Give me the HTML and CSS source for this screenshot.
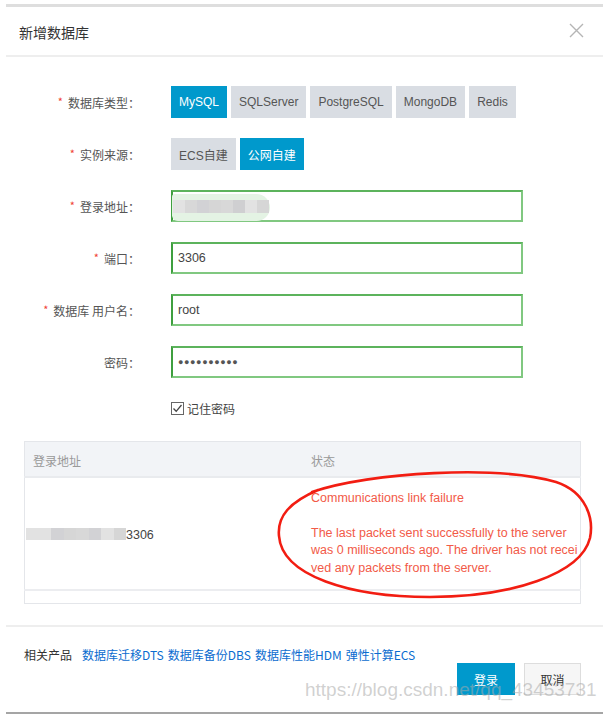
FILE: index.html
```html
<!DOCTYPE html>
<html lang="zh-CN">
<head>
<meta charset="utf-8">
<title>新增数据库</title>
<link rel="stylesheet" href="styles.css">
</head>
<body>
<div class="page">
  <div class="dialog">
    <div class="header">
      <span class="title">新增数据库</span>
      <svg class="close" width="15" height="15" viewBox="0 0 15 15"><path d="M1 1L14 14M14 1L1 14" stroke="#b5b5b5" stroke-width="1.4" fill="none"/></svg>
    </div>

    <div class="form">
      <div class="row">
        <div class="lbl"><i>*</i>数据库类型：</div>
        <div class="btns">
          <span class="opt on">MySQL</span>
          <span class="opt">SQLServer</span>
          <span class="opt">PostgreSQL</span>
          <span class="opt">MongoDB</span>
          <span class="opt">Redis</span>
        </div>
      </div>
      <div class="row">
        <div class="lbl"><i>*</i>实例来源：</div>
        <div class="btns">
          <span class="opt">ECS自建</span>
          <span class="opt on">公网自建</span>
        </div>
      </div>
      <div class="row">
        <div class="lbl"><i>*</i>登录地址：</div>
        <div class="field">
          <span class="blob"></span>
          <span class="mosaic">
            <b class="m1"></b><b class="m2"></b><b class="m3"></b><b class="m4"></b><b class="m2"></b><b class="m5"></b><b class="m1"></b><b class="m4"></b>
          </span>
        </div>
      </div>
      <div class="row">
        <div class="lbl"><i>*</i>端口：</div>
        <div class="field">3306</div>
      </div>
      <div class="row">
        <div class="lbl"><i>*</i>数据库 用户名：</div>
        <div class="field">root</div>
      </div>
      <div class="row">
        <div class="lbl">密码：</div>
        <div class="field pwd">●●●●●●●●●●</div>
      </div>
      <div class="row check-row">
        <div class="lbl"></div>
        <div class="check">
          <svg class="box" width="13" height="13" viewBox="0 0 13 13"><rect x="0.5" y="0.5" width="12" height="12" fill="#fff" stroke="#666"/><path d="M2.5 6.5L5.2 9.3L10.5 3" stroke="#444" stroke-width="1.3" fill="none"/></svg>
          <span>记住密码</span>
        </div>
      </div>
    </div>

    <div class="table-wrap">
      <table class="grid">
        <thead>
          <tr><th class="c1">登录地址</th><th class="c2">状态</th></tr>
        </thead>
        <tbody>
          <tr class="data">
            <td class="c1"><span class="mosaic small"><b class="m1"></b><b class="m1"></b><b class="m3"></b><b class="m4"></b><b class="m2"></b><b class="m3"></b><b class="m1"></b><b class="m4"></b></span>3306</td>
            <td class="c2 err">Communications link failure<br><br>The last packet sent successfully to the server<br>was 0 milliseconds ago. The driver has not recei<br>ved any packets from the server.</td>
          </tr>
          <tr class="empty"><td></td><td></td></tr>
        </tbody>
      </table>
      <svg class="ring" width="328" height="136" viewBox="0 0 328 136">
        <path d="M42 26 C 100 6, 228 -1, 286 16 C 316 26, 324 52, 320 72 C 311 108, 242 131, 160 131 C 80 131, 12 110, 9 70 C 7 50, 20 36, 48 24" stroke="#f21d12" stroke-width="2.6" fill="none" stroke-linecap="round"/>
      </svg>
    </div>

    <div class="footer">
      <div class="links">
        <span class="rel">相关产品</span>
        <a>数据库迁移DTS</a>
        <a>数据库备份DBS</a>
        <a>数据库性能HDM</a>
        <a>弹性计算ECS</a>
      </div>
      <div class="actions">
        <span class="btn primary">登录</span>
        <span class="btn">取消</span>
      </div>
    </div>
  </div>
  <div class="watermark">https://blog.csdn.net/qq_43453731</div>
</div>
</body>
</html>
```

FILE: styles.css
```css
html, body {
  margin: 0;
  padding: 0;
  background: #fff;
}

body {
  font-family: "Liberation Sans", "Noto Sans CJK SC", sans-serif;
  font-size: 12px;
  color: #333;
}

.page {
  position: relative;
  width: 603px;
  height: 717px;
  padding-top: 4px;
  box-sizing: border-box;
  overflow: hidden;
}

.dialog {
  margin-left: 6px;
  border-top: 3px solid #dedede;
  border-bottom: 2px solid #a5a5a5;
  height: 710px;
  box-sizing: border-box;
  display: flex;
  flex-direction: column;
}

.header {
  height: 50px;
  border-bottom: 2px solid #eeeeee;
  display: flex;
  align-items: center;
  justify-content: space-between;
  padding: 2px 19px 0 13px;
  box-sizing: border-box;
}

.title {
  font-family: "Noto Sans CJK SC", sans-serif;
  font-size: 14px;
  color: #333;
}

.close {
  margin-top: -4px;
}

.form {
  padding-top: 29px;
  display: flex;
  flex-direction: column;
  gap: 20px;
}

.row {
  display: grid;
  grid-template-columns: 134px 352px;
  column-gap: 31px;
  align-items: center;
  height: 32px;
}

.lbl {
  text-align: right;
  font-family: "Noto Sans CJK SC", sans-serif;
  font-size: 12px;
  color: #555;
  white-space: nowrap;
}

.lbl i {
  font-style: normal;
  color: #f04134;
  font-size: 11px;
  margin-right: 5px;
  position: relative;
  top: -2px;
}

.btns {
  display: flex;
  gap: 3px;
  height: 32px;
}

.btns .opt {
  display: flex;
  align-items: center;
  padding: 0 8px;
  background: #d9dde3;
  color: #555;
  font-size: 12px;
  white-space: nowrap;
}

.btns .opt.on {
  background: #0099cc;
  color: #fff;
}

.btns .opt + .opt {
  margin-left: 1px;
}

.field {
  height: 32px;
  box-sizing: border-box;
  border: 2px solid #80c880;
  border-left-color: #3f9f3f;
  border-top-color: #5cb35c;
  display: flex;
  align-items: center;
  padding-left: 5px;
  font-size: 12.5px;
  color: #444;
  position: relative;
}

.field.pwd {
  font-size: 9px;
  letter-spacing: 0.6px;
  color: #555;
}

.blob {
  position: absolute;
  left: -1px;
  top: 2px;
  width: 98px;
  height: 27px;
  background: #e4f3e4;
  border-radius: 3px 14px 14px 6px;
}

.mosaic {
  display: inline-flex;
  position: relative;
  margin-left: -5px;
}

.mosaic b {
  display: block;
  width: 12px;
  height: 13px;
}

.mosaic.small {
  margin-left: -7px;
  margin-right: 0;
}

.mosaic.small b {
  height: 12px;
  width: 12.5px;
}

.m1 { background: #e2e2e2; }
.m2 { background: #d8d8d8; }
.m3 { background: #d2d2d5; }
.m4 { background: #d6d6d6; }
.m5 { background: #cfcfd1; }

.check-row {
  height: 18px;
  margin-top: 1px;
}

.check {
  display: flex;
  align-items: center;
  gap: 3px;
  font-family: "Noto Sans CJK SC", sans-serif;
  font-size: 12px;
  color: #444;
}

.table-wrap {
  position: relative;
  margin: 24px 22px 0 18px;
}

.grid {
  width: 557px;
  border-collapse: collapse;
  border: 1px solid #e4e6ea;
  table-layout: fixed;
}

.grid th {
  height: 32px;
  background: #f2f4f7;
  border-bottom: 2px solid #e9ebee;
  text-align: left;
  font-weight: normal;
  font-family: "Noto Sans CJK SC", sans-serif;
  font-size: 12px;
  color: #999;
  padding: 2px 8px 0;
}

.grid th.c1 {
  width: 262px;
}

.grid td {
  padding: 0 8px;
  vertical-align: middle;
}

.grid tr.data td {
  height: 109px;
  border-bottom: 2px solid #ecedf0;
}

.grid tr.data td.c1 {
  font-size: 12.5px;
  color: #444;
  padding-left: 8px;
  padding-top: 2px;
}

.grid tr.data td.c1 .mosaic {
  vertical-align: -1px;
}

.err {
  color: #f25a48;
  font-size: 12.5px;
  line-height: 17.5px;
  white-space: nowrap;
}

.grid tr.empty td {
  height: 12px;
}

.ring {
  position: absolute;
  left: 246px;
  top: 25px;
}

.footer {
  margin-top: 21px;
  border-top: 2px solid #eeeeee;
  flex: 1;
}

.links {
  margin: 20px 0 0 18px;
  line-height: 16px;
  font-family: "Noto Sans CJK SC", sans-serif;
  font-size: 12px;
  display: flex;
  gap: 4px;
}

.links .rel {
  color: #333;
  margin-right: 6px;
}

.links a {
  color: #0a6ccf;
}

.actions {
  display: flex;
  justify-content: flex-end;
  gap: 9px;
  margin-top: 0;
  padding-right: 22px;
}

.btn {
  width: 57px;
  height: 32px;
  box-sizing: border-box;
  display: flex;
  align-items: center;
  justify-content: center;
  background: #f6f6f6;
  border: 1px solid #dddddd;
  font-family: "Noto Sans CJK SC", sans-serif;
  font-size: 12px;
  color: #333;
}

.btn.primary {
  width: 58px;
  background: #0099cc;
  border-color: #0099cc;
  color: #fff;
}

.watermark {
  position: absolute;
  left: 305px;
  top: 679px;
  font-family: "Liberation Sans", sans-serif;
  font-size: 19px;
  color: rgba(170, 170, 170, 0.55);
  white-space: nowrap;
}
```
